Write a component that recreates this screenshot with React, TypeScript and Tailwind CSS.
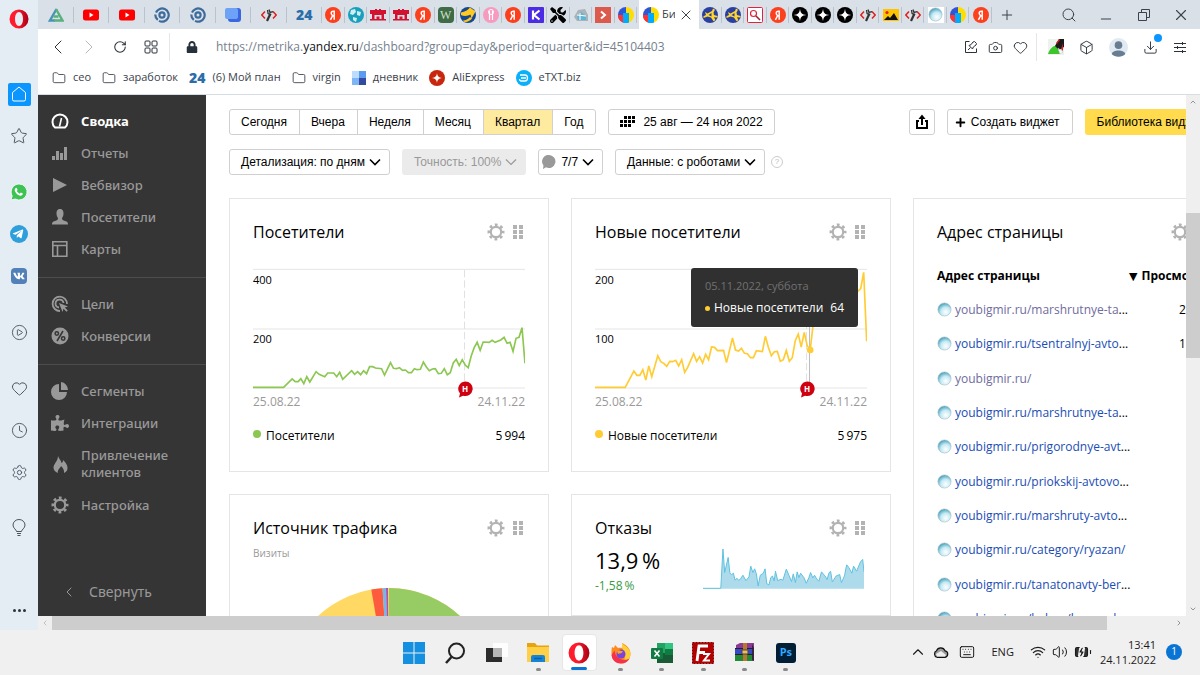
import React from 'react';
import {
  BatteryCharging, Box, Camera, ChevronDown, ChevronLeft, ChevronRight, ChevronUp, CirclePlay, Clock,
  Download, Folder, Heart, Keyboard, Minus, Plus, RotateCw, Search, Settings, Star, Volume2, Wifi, X,
} from 'lucide-react';
import { FaTelegramPlane, FaVk, FaPuzzlePiece, FaLock, FaTools } from 'react-icons/fa';

const visitors =
  '96,590 188,590 214,565 223,573 232,573 240,564 249,579 258,558 267,574 286,543 295,551 312,558 321,547 339,547 348,558 357,545 366,566 393,540 402,551 411,543 420,552 429,540 438,549 447,528 456,528 465,532 483,534 492,553 510,516 519,533 528,534 537,531 546,539 555,538 564,546 573,546 582,534 590,537 600,536 609,514 618,529 627,540 636,535 645,534 654,549 663,548 672,534 681,552 690,546 699,517 708,506 717,525 726,507 735,523 744,531 753,496 762,471 771,455 780,479 789,454 807,455 816,449 825,455 842,448 852,440 861,458 870,455 879,482 888,443 897,440 906,411 915,518';
const newVisitors =
  '96,590 187,590 213,541 222,554 231,554 240,537 249,568 258,526 267,558 285,495 294,513 303,518 312,527 321,512 330,513 339,509 348,526 357,507 366,545 375,530 393,489 402,512 411,498 420,517 429,491 438,507 447,469 456,470 465,480 483,479 492,516 510,442 519,478 528,481 537,473 546,488 555,489 564,501 573,501 582,480 600,483 609,437 618,470 627,495 636,483 645,482 654,512 663,507 672,479 681,512 690,501 699,450 708,430 717,469 726,425 735,465 744,478 753,400 771,330 789,350 870,340 887,302 896,294 905,245 914,452';
const bounces =
  '1114,307 1155,307 1160,190 1164,260 1172,215 1176,262 1180,266 1184,262 1188,283 1192,277 1196,283 1200,280 1206,268 1213,284 1220,273 1224,241 1229,260 1233,249 1237,264 1241,300 1246,268 1253,262 1257,249 1261,293 1266,297 1270,276 1274,270 1278,285 1281,256 1286,284 1294,280 1298,283 1306,250 1312,268 1318,287 1322,264 1327,290 1331,258 1335,275 1339,262 1347,276 1352,292 1358,275 1362,260 1367,276 1371,268 1376,279 1381,286 1387,258 1395,270 1400,281 1404,262 1408,256 1412,288 1421,270 1429,266 1433,290 1440,270 1445,237 1450,245 1457,262 1461,241 1468,256 1477,228 1482,221 1485,258';

// ---------- favicons ----------

const Ya = () => (
  <svg viewBox="0 0 16 16" className="size-4">
    <circle cx="8" cy="8" r="8" fill="#fc3f1d" />
    <path d="M9.200 12.800V4.300H8.400c-1.400 0-2.200.7-2.200 1.900 0 1.100.5 1.700 1.500 2.400l-2.300 4.200M9 9H7.600" stroke="#fff" strokeWidth="1.500" fill="none" />
  </svg>
);
const Metrika = () => (
  <svg viewBox="0 0 16 16" className="size-4">
    <path d="M8 0a8 8 0 0 0 0 16z" fill="#3156d3" />
    <path d="M8 0a8 8 0 0 1 0 16z" fill="#fd0" />
    <path d="M0 8h5v7.500A8 8 0 0 1 0 8z" fill="#f33" />
    <path d="M5 6h6v9.400a8 8 0 0 1-6 0z" fill="#00aaff" />
  </svg>
);
const Youtube = () => (
  <svg viewBox="0 0 16 12" className="h-3 w-4">
    <rect y="0.500" width="16" height="11" rx="2.500" fill="red" />
    <path d="M6.500 3.500v5l4-2.500z" fill="#fff" />
  </svg>
);
const Swirl = () => (
  <svg viewBox="0 0 16 16" className="size-4" fill="none" stroke="#3f6b9b" strokeWidth="2.200">
    <path d="M5 13.900A6.600 6.600 0 1 0 2 5.500M1.300 7.500a6.600 6.600 0 0 0 2.500 5.300" />
    <circle cx="8" cy="8" r="2.600" />
  </svg>
);
const Plan24 = () => <b className="text-sm leading-4 font-extrabold text-[#2a6da8]">24</b>;
const CodeWrench = () => (
  <svg viewBox="0 0 16 16" className="size-4" fill="none">
    <path d="M4 4.500.8 8 4 11.500M12 4.500 15.200 8 12 11.500" stroke="#e0201b" strokeWidth="1.500" />
    <path d="M6 14 9.500 6.500" stroke="#333" strokeWidth="2.200" />
    <path d="M8 2.500 9 5.500l3-.8M6.500 3l.6 3.500L10 8" stroke="#333" strokeWidth="1.300" />
  </svg>
);
const Triangle = () => (
  <svg viewBox="0 0 16 16" className="size-4" fill="none" strokeWidth="2.400">
    <path d="M8.500 2 2 13.500h5" stroke="#4a93b5" />
    <path d="M5.500 9.500h5M8 2l6.500 11.500H6" stroke="#58b07c" />
  </svg>
);
const BlueCube = () => (
  <svg viewBox="0 0 16 16" className="size-4">
    <rect x="3" y="1" width="13" height="14" rx="3" fill="#3a66e0" />
    <rect y="1" width="13" height="11" rx="2" fill="#6ea2f7" />
  </svg>
);
const GlobeMini = () => (
  <svg viewBox="0 0 16 16" className="size-4">
    <circle cx="8" cy="8" r="8" fill="#19a0bc" />
    <path d="M3 3l4-1 1 3-3 3-3-1zM9 4l4 1-1 4-3-1zM5 10l4 1-1 4-3-2z" fill="#cfeef2" />
  </svg>
);
const Castle = () => (
  <svg viewBox="0 0 16 16" className="size-4" fill="#d3122f">
    <path d="M0 3h5V2h2v1h2V2h2v1h5v4h-2v5h2v1.500H0V12h2V7H0zM4.500 8v4h2V9.500h3V12h2V8z" fillRule="evenodd" />
  </svg>
);
const GreenW = () => (
  <span className="flex size-4 items-center justify-center rounded-sm bg-[#3f6b46] font-['Liberation_Serif',serif] text-xs leading-4 text-[#cfe0c8]">W</span>
);
const Swoosh = () => (
  <svg viewBox="0 0 16 16" className="size-4">
    <circle cx="8" cy="8" r="8" fill="#17468f" />
    <path d="M1 5.500C5 5 8 3 10 .5l5.500 4-4 7-1-4C8 9 4 9.500 1 8zM3 13.500c3 0 5-1.500 7-3.500l2 1.500c-2 2.500-5 4-7.500 3.500z" fill="#ffc91f" />
  </svg>
);
const Pink = () => (
  <svg viewBox="0 0 16 16" className="size-4">
    <circle cx="8" cy="8" r="8" fill="#f79ac0" />
    <path d="M6.500 4v9M9.500 4v9" stroke="#fff" strokeWidth="1.200" />
    <circle cx="8" cy="5" r="2.500" fill="none" stroke="#fff" />
  </svg>
);
const KIcon = () => (
  <svg viewBox="0 0 16 16" className="size-4">
    <rect width="16" height="16" rx="1" fill="#4b2be3" />
    <path d="M5 3.500v9M11.500 3.500 6 8l5.500 4.500" stroke="#fff" strokeWidth="2.200" fill="none" />
  </svg>
);
const Tools = () => <FaTools className="size-4 text-black" />;
const GrayHouse = () => (
  <svg viewBox="0 0 16 16" className="size-4">
    <path d="M1 10 5 3l7-1 3 6v6H4z" fill="#aab3b8" />
    <path d="M4 9l4-4 5 4v4H5z" fill="#5fb4d4" />
    <path d="M4 8l9 1M7 6v7" stroke="#fff" />
  </svg>
);
const RedArrow = () => (
  <svg viewBox="0 0 16 16" className="size-4">
    <rect width="16" height="16" fill="#db5a4b" />
    <path d="M6 4.500 10 8l-4 3.500" stroke="#fff" strokeWidth="2" fill="none" />
  </svg>
);
const BlueBall = () => (
  <svg viewBox="0 0 16 16" className="size-4">
    <circle cx="8" cy="8" r="8" fill="#2b3fa0" />
    <path d="M3 5l2.500 1.500L10 4l1-2.500 2 1.300-1.500 2.700L12 8l3.500 1v1.500L12 10.300l1.500 3-2 1-2.500-3.800-3.500-1L1.500 11V9.300L4 8z" fill="#ffd62e" />
    <path d="M6.500 8 9.500 6v3.500z" fill="#2b3fa0" />
  </svg>
);
const RedSearch = () => (
  <svg viewBox="0 0 16 16" className="size-4" fill="none">
    <rect x="0.500" y="0.500" width="15" height="15" rx="1" fill="#fff" stroke="#e0233c" />
    <circle cx="6.500" cy="6.500" r="3" stroke="#e0233c" strokeWidth="1.200" />
    <path d="m9 9 4 4" stroke="#a02030" strokeWidth="1.600" />
  </svg>
);
const BlackStar = () => (
  <svg viewBox="0 0 16 16" className="size-4">
    <circle cx="8" cy="8" r="8" />
    <path d="M8 1.500C8.300 6 10 7.700 14.500 8 10 8.300 8.300 10 8 14.500 7.700 10 6 8.300 1.500 8 6 7.700 7.700 6 8 1.500z" fill="#fff" />
  </svg>
);
const Picture = () => (
  <svg viewBox="0 0 16 16" className="size-4">
    <rect y="2" width="16" height="12" fill="#ffc400" />
    <circle cx="4" cy="5.500" r="1.600" fill="#e0201b" />
    <path d="M1 13l4-4 2 2 4-5 4 7z" fill="#111" />
  </svg>
);
const Orb = () => (
  <svg viewBox="0 0 16 16" className="size-4 shrink-0">
    <defs>
      <radialGradient id="orb" cx="0.600" cy="0.700" r="0.750">
        <stop offset="0" stopColor="#fff" />
        <stop offset="0.500" stopColor="#c4e9f3" />
        <stop offset="1" stopColor="#2e93b0" />
      </radialGradient>
    </defs>
    <circle cx="7.500" cy="7.500" r="6.600" fill="url(#orb)" stroke="#a9bfc6" strokeWidth="0.600" />
  </svg>
);
const OrbTab = () => <span className="bg-white"><Orb /></span>;
const OperaRing = ({ className }: { className: string }) => (
  <svg viewBox="0 0 20 20" className={className}>
    <defs>
      <linearGradient id="opera" x1="0" x2="1">
        <stop offset="0.400" stopColor="#ff1b2d" />
        <stop offset="1" stopColor="#a70014" />
      </linearGradient>
    </defs>
    <path fillRule="evenodd" fill="url(#opera)" d="M10 .5a9.500 9.500 0 1 0 0 19 9.500 9.500 0 0 0 0-19zM10 3c2.400 0 4 3 4 7s-1.600 7-4 7-4-3-4-7 1.600-7 4-7z" />
  </svg>
);
const Caret = ({ thin }: { thin?: boolean }) => (
  <svg viewBox="0 0 14 14" className="size-[14px]" fill="none" stroke="currentColor" strokeWidth={thin ? 1.2 : 1.6}>
    <path d="m2 4.500 5 5 5-5" />
  </svg>
);

const pinnedTabs = [Triangle, Youtube, Youtube, Swirl, Swirl, BlueCube, CodeWrench, Plan24];
const leftTabs = [Ya, GlobeMini, Castle, Castle, Ya, GreenW, Swoosh, Pink, Ya, KIcon, Tools, GrayHouse, RedArrow, Metrika];
const rightTabs = [BlueBall, BlueBall, RedSearch, Ya, BlackStar, BlackStar, BlackStar, CodeWrench, Picture, CodeWrench, OrbTab, Metrika, Ya];

function TabIcon({ icon: Icon }: { icon: React.FC }) {
  return (
    <button className="relative flex items-center justify-center">
      <Icon />
      <span className="absolute right-0 h-4 w-px bg-[#b9c2cd]" />
    </button>
  );
}

function TabStrip() {
  return (
    <div className="flex h-[29px] shrink-0 items-stretch bg-[#d9e0e8] text-[#3a424c]">
      <div className="grid w-[284px] shrink-0 grid-cols-8">
        {pinnedTabs.map((icon, i) => <TabIcon key={i} icon={icon} />)}
      </div>
      <div className="grid w-[315px] shrink-0 grid-cols-14">
        {leftTabs.map((icon, i) => <TabIcon key={i} icon={icon} />)}
      </div>
      <div className="ml-0.5 flex w-[60px] shrink-0 items-center gap-[3px] bg-white pl-1">
        <Metrika />
        <span className="w-[13px] overflow-hidden text-[11px] whitespace-nowrap">Би</span>
        <button aria-label="Закрыть вкладку"><X className="size-4" strokeWidth={1.5} /></button>
      </div>
      <div className="grid w-[293px] shrink-0 grid-cols-13">
        {rightTabs.map((icon, i) => <TabIcon key={i} icon={icon} />)}
      </div>
      <button className="flex w-[30px] shrink-0 items-center justify-center" aria-label="Новая вкладка">
        <Plus className="size-4" strokeWidth={1.5} />
      </button>
      <div className="ml-auto grid w-[150px] shrink-0 grid-cols-4 place-items-center">
        <button aria-label="Поиск"><Search className="size-4" strokeWidth={1.5} /></button>
        <button aria-label="Свернуть" className="pt-2"><Minus className="size-4" strokeWidth={1.5} /></button>
        <button aria-label="Развернуть">
          <svg viewBox="0 0 12 12" className="size-3" fill="none" stroke="currentColor">
            <path d="M.5 3.500h8v8h-8zM3.500 3.500v-3h8v8h-3" />
          </svg>
        </button>
        <button aria-label="Закрыть"><X className="size-[18px]" strokeWidth={1.5} /></button>
      </div>
    </div>
  );
}

function AddressBar() {
  return (
    <div className="flex h-9 shrink-0 items-center bg-white pr-[13px] text-[#2b323a]">
      <div className="ml-1 grid w-[124px] shrink-0 grid-cols-4 place-items-center">
        <button aria-label="Назад"><ChevronLeft className="size-6" strokeWidth={1} /></button>
        <button aria-label="Вперёд"><ChevronRight className="size-6 text-[#b5b8bc]" strokeWidth={1} /></button>
        <button aria-label="Обновить"><RotateCw className="size-[14px]" strokeWidth={1.8} /></button>
        <button aria-label="Экспресс-панель">
          <svg viewBox="0 0 14 14" className="size-[14px]" fill="none" stroke="currentColor">
            <rect x="1" y="1" width="5" height="5" rx="1" /><rect x="8" y="1" width="5" height="5" rx="1" />
            <rect x="1" y="8" width="5" height="5" rx="1" /><rect x="8" y="8" width="5" height="5" rx="1" />
          </svg>
        </button>
      </div>
      <span className="ml-[3px] h-7 w-px bg-[#e4e7ea]" />
      <FaLock className="ml-4 size-3 text-[#26313b]" />
      <span className="ml-[18px] flex-1 overflow-hidden text-xs whitespace-nowrap text-[#75818e]">
        https://metrika.<span className="text-[#111]">yandex.ru</span>/dashboard?group=day&amp;period=quarter&amp;id=45104403
      </span>
      <div className="flex items-center gap-[10px]">
        <button aria-label="Снимок">
          <svg viewBox="0 0 14 14" className="size-[14px]" fill="none" stroke="currentColor">
            <path d="M5.500 1.500H1.500v11h11V8.500M4 10l2.500-2.500M5 5.500 8.500 9l.8-2L12 5l.5-1.500-2-2L9 2 7 4.700z" />
          </svg>
        </button>
        <button aria-label="Камера"><Camera className="size-[15px]" strokeWidth={1.5} /></button>
        <button aria-label="Избранное"><Heart className="size-[15px]" strokeWidth={1.5} /></button>
      </div>
      <span className="ml-2 h-7 w-px bg-[#e4e7ea]" />
      <div className="ml-[11px] flex items-center gap-[15px]">
        <svg viewBox="0 0 16 16" className="size-4">
          <rect width="16" height="16" fill="#eef2ee" />
          <path d="M0 15C2 9 6 6 9 7l3 8z" fill="#3cc62c" />
          <path d="M7 7l4-7h5v8l-5 3z" fill="#1a1a1a" />
          <path d="M8 4l3-4 1 1-3 4zM15 4v8l-2-2z" fill="#d02020" />
          <path d="m10 9 5 4-3 2z" fill="#fff" stroke="#bbb" strokeWidth="0.500" />
        </svg>
        <Box className="size-[15px]" strokeWidth={1.5} />
        <svg viewBox="0 0 20 20" className="size-[19px]">
          <circle cx="10" cy="10" r="10" fill="#e1e9f2" />
          <circle cx="10" cy="7.500" r="4" fill="#687d92" />
          <path d="M3 17c0-5 14-5 14 0-3 3.500-11 3.500-14 0z" fill="#687d92" />
        </svg>
        <button className="relative" aria-label="Загрузки">
          <Download className="size-[15px]" strokeWidth={1.5} />
          <span className="absolute -top-1.5 -right-1 size-2 rounded-full bg-[#0a95ff]" />
        </button>
        <button aria-label="Настройки панели">
          <svg viewBox="0 0 14 14" className="size-[14px]" fill="none" stroke="currentColor">
            <path d="M1 3.500h12M1 7.500h12M1 11.500h12M9.500 2v3M4.500 6v3M9.500 10v3" />
          </svg>
        </button>
      </div>
    </div>
  );
}

const bookmarks = [
  { label: 'сео', icon: 'folder' },
  { label: 'заработок', icon: 'folder' },
  { label: '(6) Мой план', icon: 'plan' },
  { label: 'virgin', icon: 'folder' },
  { label: 'дневник', icon: 'diary' },
  { label: 'AliExpress', icon: 'ali' },
  { label: 'eTXT.biz', icon: 'etxt' },
];

function BookmarkIcon({ icon }: { icon: string }) {
  if (icon === 'folder') return <Folder className="size-[14px]" strokeWidth={1.5} />;
  if (icon === 'plan') return <Plan24 />;
  if (icon === 'diary')
    return (
      <svg viewBox="0 0 14 14" className="size-[14px]">
        <path d="M0 0h7v14H0z" fill="#7fb5f5" /><path d="M7 0h7v7H7z" fill="#5c9cf0" /><path d="M7 7h7v7H7z" fill="#334b9f" /><path d="M0 0h7v7H0z" fill="#bcdcff" />
      </svg>
    );
  if (icon === 'ali')
    return (
      <svg viewBox="0 0 16 16" className="size-4">
        <circle cx="8" cy="8" r="8" fill="#c8270e" />
        <path d="M8 3c.4 3.300 1.700 4.600 5 5-3.300.4-4.600 1.700-5 5-.4-3.300-1.700-4.600-5-5 3.300-.4 4.600-1.700 5-5z" fill="#fff" />
      </svg>
    );
  return (
    <svg viewBox="0 0 16 16" className="size-4" fill="none" stroke="#fff" strokeWidth="1.300">
      <circle cx="8" cy="8" r="8" fill="#0bb0fa" stroke="none" />
      <path d="M4 5h5a2.500 3 0 0 1 0 6H5a2 2 0 0 1-1.500-2M5 8h5" />
    </svg>
  );
}

function Bookmarks() {
  return (
    <nav className="flex h-[30px] shrink-0 items-center gap-[11px] border-b border-[#d5dde5] bg-white px-[14px] pb-1 text-[11px] whitespace-nowrap text-[#3a424c]">
      {bookmarks.map((b) => (
        <a key={b.label} href="#" className="flex items-center gap-[7px]">
          <BookmarkIcon icon={b.icon} />
          {b.label}
        </a>
      ))}
    </nav>
  );
}

// ---------- opera rail ----------

function Rail() {
  const slot = 'flex h-[42px] shrink-0 items-center justify-center';
  return (
    <aside className="flex w-[38px] shrink-0 flex-col bg-[#e4ecf4] text-[#4a545f]">
      <div className="mb-9 flex h-[37px] items-center justify-center"><OperaRing className="size-5" /></div>
      <button className={slot} aria-label="Главная">
        <span className="flex size-[23px] items-center justify-center rounded-xs bg-[#0a95ff] text-white">
          <svg viewBox="0 0 16 16" className="size-4" fill="none" stroke="currentColor">
            <path d="M8 1 1.500 6.500v7A1.500 1.500 0 0 0 3 15h10a1.500 1.500 0 0 0 1.500-1.500v-7z" />
          </svg>
        </span>
      </button>
      <button className={slot} aria-label="Закладки"><Star className="size-[18px]" strokeWidth={1.3} /></button>
      <button className={slot + ' mt-[14px]'} aria-label="WhatsApp">
        <svg viewBox="0 0 18 18" className="size-[18px]">
          <path d="M9 1a8 8 0 1 1-3.800 15L1 17l1.200-4A8 8 0 0 1 9 1z" fill="#3dc254" stroke="#fff" strokeWidth="0.800" />
          <path d="M5.200 5.500c.8-1 1.500-.8 1.800 0l.6 1.400-.8 1.200c.6 1.200 1.600 2 2.900 2.600l1.100-1.100 2 1c.2 1.200-.9 2.100-2.200 2.100-2.900-.3-5.700-3.300-5.900-5.700 0-.6.200-1.100.5-1.500z" fill="#fff" />
        </svg>
      </button>
      <button className={slot} aria-label="Telegram">
        <span className="flex size-[18px] items-center justify-center rounded-full bg-[#2e9fdb] pr-0.5 text-white"><FaTelegramPlane className="size-3" /></span>
      </button>
      <button className={slot} aria-label="VK">
        <span className="flex size-4 items-center justify-center rounded bg-[#5181b8] text-white"><FaVk className="size-3" /></span>
      </button>
      <button className={slot + ' mt-[14px]'} aria-label="Плеер"><CirclePlay className="size-[17px]" strokeWidth={1.3} /></button>
      <button className={slot + ' mt-[14px]'} aria-label="Избранное"><Heart className="size-[17px]" strokeWidth={1.4} /></button>
      <button className={slot} aria-label="История"><Clock className="size-[17px]" strokeWidth={1.3} /></button>
      <button className={slot} aria-label="Настройки"><Settings className="size-[17px]" strokeWidth={1.3} /></button>
      <button className={slot + ' mt-[14px]'} aria-label="Подсказки">
        <svg viewBox="0 0 14 18" className="h-[18px] w-[14px]" fill="none" stroke="currentColor">
          <path d="M4.500 12.500c0-2-3.500-3-3.500-6.500a6 5.500 0 0 1 12 0c0 3.500-3.500 4.500-3.500 6.500zM5 14.500h4M5.500 16.500h3" />
        </svg>
      </button>
      <button className="mt-auto flex h-10 items-center justify-center gap-0.5" aria-label="Ещё">
        <i className="size-[3px] rounded-full bg-[#2b323a]" />
        <i className="size-[3px] rounded-full bg-[#2b323a]" />
        <i className="size-[3px] rounded-full bg-[#2b323a]" />
      </button>
    </aside>
  );
}

// ---------- metrika ----------

const Gear = ({ className }: { className: string }) => (
  <svg viewBox="0 0 18 18" className={className} fill="none" stroke="currentColor">
    <circle cx="9" cy="9" r="5.200" strokeWidth="2.200" />
    <circle cx="9" cy="9" r="7.200" strokeWidth="2.600" strokeDasharray="2.800 2.855" strokeDashoffset="1.400" />
  </svg>
);

const navIcons: Record<string, React.ReactNode> = {
  summary: <g fill="none" stroke="currentColor" strokeWidth="2"><path d="M4 15.500A7.500 7.500 0 1 1 14 15.500z" /><path d="M8.500 14.500 10.500 6" strokeWidth="1.600" /></g>,
  reports: <path d="M1 12h3v4H1zM5 7h3v9H5zM9 9h3v7H9zM13 3h3v13h-3z" />,
  webvisor: <path d="M2 2v14l14-7z" />,
  people: <path d="M9 1C6 1 5.500 3.500 5.500 5.500c0 2 .8 3.500 1.500 4.500 0 2-1 2.500-3 3-2.500.6-3 1.500-3 3.500h16c0-2-.5-2.900-3-3.500-2-.5-3-1-3-3 .7-1 1.500-2.500 1.500-4.500C12.500 3.500 12 1 9 1z" />,
  maps: <path d="M1.800 1.800h14v14.500h-14zM1.800 5.500h14M6.500 5.500v10.800" fill="none" stroke="currentColor" strokeWidth="1.600" />,
  goals: <g fill="none" stroke="currentColor" strokeWidth="1.800"><path d="M16 9A7.200 7.200 0 1 0 9 16M12.500 8A4 4 0 1 0 8 12.500" /><path d="m8 8 9 3.500-3.200 1 3 3-1.300 1.300-3-3L11.500 17z" fill="currentColor" stroke="none" /></g>,
  conversions: <g><circle cx="9" cy="9" r="8.500" /><g fill="none" stroke="#353535" strokeWidth="1.500"><path d="M12 4 6 14" /><circle cx="5.800" cy="6.500" r="1.700" /><circle cx="12.200" cy="11.500" r="1.700" /></g></g>,
  segments: <path d="M8 2v8h8a8 8 0 1 1-8-8zM10 0a8 8 0 0 1 7 8h-7z" />,
  leads: <path d="M7 1c1 3 3 4 3.500 7 1-.5 1.500-1.500 1.500-3 3 3 4.500 5 4.500 8 0 2-1 4-3.500 5 .5-3-1-5-3-7-1 2.500-4 4-3 7-3-1-4.500-3-4.500-5.500C2.500 9 7 6 7 1z" />,
};

function NavItem({ icon, label, active }: { icon: string; label: React.ReactNode; active?: boolean }) {
  return (
    <a href="#" className={'flex min-h-8 items-center gap-3 pl-[13px] leading-[17px] ' + (active ? 'font-bold text-white' : 'font-medium text-[#999]')}>
      {icon === 'puzzle' ? <FaPuzzlePiece className="size-[18px] shrink-0" />
        : icon === 'settings' ? <Gear className="size-[18px] shrink-0" />
        : <svg viewBox="0 0 18 18" className="size-[18px] shrink-0" fill="currentColor">{navIcons[icon]}</svg>}
      <span>{label}</span>
    </a>
  );
}

function MetrikaNav() {
  return (
    <nav className="flex w-[168px] shrink-0 flex-col bg-[#353535] font-['Noto_Sans',sans-serif] text-[13px]">
      <div className="border-b border-[#4d4d4d] pt-[10px] pb-3">
        <NavItem icon="summary" label="Сводка" active />
        <NavItem icon="reports" label="Отчеты" />
        <NavItem icon="webvisor" label="Вебвизор" />
        <NavItem icon="people" label="Посетители" />
        <NavItem icon="maps" label="Карты" />
      </div>
      <div className="border-b border-[#4d4d4d] pt-[10px] pb-3">
        <NavItem icon="goals" label="Цели" />
        <NavItem icon="conversions" label="Конверсии" />
      </div>
      <div className="pt-[10px] pb-3">
        <NavItem icon="segments" label="Сегменты" />
        <NavItem icon="puzzle" label="Интеграции" />
        <div className="py-2"><NavItem icon="leads" label={<>Привлечение<br />клиентов</>} /></div>
        <NavItem icon="settings" label="Настройка" />
      </div>
      <button className="mt-auto mb-3 flex h-6 items-center gap-3 pl-[23px] text-sm text-[#999]">
        <ChevronLeft className="size-4" strokeWidth={1.5} /> Свернуть
      </button>
    </nav>
  );
}

const btn = 'flex h-[26px] items-center rounded-[3px] border border-[#d0d0d0] bg-white';

function Toolbar() {
  const periods = ['Сегодня', 'Вчера', 'Неделя', 'Месяц', 'Квартал', 'Год'];
  return (
    <div className="flex flex-col gap-[14px] font-['Liberation_Sans',Arial,sans-serif] text-xs whitespace-nowrap text-black">
      <div className="flex items-center">
        <div className={btn + ' overflow-hidden'}>
          {periods.map((p) => (
            <button key={p} className={'h-full border-r border-[#d0d0d0] pr-3 pl-[11px] last:border-r-0 ' + (p === 'Квартал' ? 'bg-[#ffeba0]' : '')}>{p}</button>
          ))}
        </div>
        <button className={btn + ' ml-3 gap-2 px-[11px]'}>
          <svg viewBox="0 0 15 12" className="h-3 w-[15px]">
            <path d="M4 0h3v3H4zM8 0h3v3H8zM12 0h3v3h-3zM0 4h3v3H0zM4 4h3v3H4zM8 4h3v3H8zM12 4h3v3h-3zM0 8h3v3H0zM4 8h3v3H4zM8 8h3v3H8z" />
          </svg>
          25 авг — 24 ноя 2022
        </button>
        <button className={btn + ' ml-auto w-[26px] justify-center'} aria-label="Экспорт">
          <svg viewBox="0 0 14 16" className="h-4 w-[14px]" fill="none" stroke="currentColor" strokeWidth="2">
            <path d="M4 7H2v7h10V7h-2M7 11V3" /><path d="M3.500 5 7 .5 10.500 5z" fill="currentColor" stroke="none" />
          </svg>
        </button>
        <button className={btn + ' ml-3 gap-1 px-[6px] pr-3'}>
          <Plus className="size-[13px]" strokeWidth={3.5} /> Создать виджет
        </button>
        <button className="ml-3 flex h-[26px] items-center rounded-[3px] bg-[#ffdb4d] pr-[15px] pl-3">Библиотека виджетов</button>
      </div>
      <div className="flex items-center gap-3">
        <button className={btn + ' gap-[3px] pr-[7px] pl-[11px]'}>Детализация: по дням <Caret /></button>
        <button disabled className="flex h-[26px] items-center gap-[3px] rounded-[3px] bg-[#ebebeb] pr-2 pl-3 text-[#999]">Точность: 100% <Caret thin /></button>
        <button className={btn + ' gap-[3px] pr-[7px] pl-[3px]'}>
          <svg viewBox="0 0 14 14" className="mr-0.5 size-[14px]" fill="#999"><path d="M7 0a6.500 6.500 0 1 1-3 12.300L1 14l.5-3.500A6.500 6.500 0 0 1 7 0z" /></svg>
          7/7 <Caret />
        </button>
        <button className={btn + ' gap-[3px] pr-[7px] pl-[11px]'}>Данные: с роботами <Caret /></button>
        <span className="-ml-[6px] flex size-3 items-center justify-center rounded-full border border-[#ccc] text-[8px] text-[#bbb]">?</span>
      </div>
    </div>
  );
}

function Card({ title, className = '', children }: { title: string; className?: string; children: React.ReactNode }) {
  return (
    <section className={'border border-[#e5e5e5] bg-white px-[23px] pt-[21px] ' + className}>
      <header className="flex h-6 items-center justify-between">
        <h2 className="text-base">{title}</h2>
        <div className="flex items-center gap-2 pr-0.5 text-[#b3b3b3]">
          <button aria-label="Настроить"><Gear className="size-[18px]" /></button>
          <svg viewBox="0 0 10 16" className="h-4 w-[10px]" fill="currentColor">
            <path d="M0 1h4v4H0zM6 1h4v4H6zM0 6h4v4H0zM6 6h4v4H6zM0 11h4v4H0zM6 11h4v4H6z" />
          </svg>
        </div>
      </header>
      {children}
    </section>
  );
}

interface ChartProps { points: string; color: string; top: string; mid: string; name: string; total: string; hover?: boolean }

function LineCard({ points, color, top, mid, name, total, hover }: ChartProps) {
  return (
    <Card title={name} className="h-[274px]">
      <div className="relative mt-[23px] h-[128px] text-[11px] leading-[14px]">
        <svg viewBox="96 229 819 384" preserveAspectRatio="none" className="absolute inset-0 size-full">
          <path d="M96 236h819M96 415h819M96 592h819" stroke="#e5e5e5" strokeWidth="3" />
          <path d="M733 238v354" stroke="#e0e0e0" strokeWidth="3" strokeDasharray="22 9" />
          {hover && <path d="M742 400v192" stroke="#bbb" strokeWidth="3" />}
          <polyline points={points} fill="none" stroke={color} strokeWidth="5" />
          {hover && <circle cx="744" cy="478" r="10" fill={color} />}
        </svg>
        <svg viewBox="0 0 16 17" className="absolute bottom-[-3px] left-[75%] h-[17px] w-4">
          <path d="M8 .5a7.300 7.300 0 1 1-2 14.200L2 16.500l1-4A7.300 7.300 0 0 1 8 .5z" fill="#cf0010" />
          <text x="8" y="11" textAnchor="middle" fontSize="8" fontWeight="bold" fill="#fff">Н</text>
        </svg>
        <div className="pt-[6px]">{top}</div>
        <div className="pt-[45px]">{mid}</div>
        {hover && (
          <div className="absolute top-px right-[9px] h-[59px] w-[167px] rounded-[3px] bg-[#303030] px-[14px] pt-[10px] leading-4 whitespace-nowrap">
            <div className="text-[#707070]">05.11.2022, суббота</div>
            <div className="mt-[6px] flex items-center text-xs leading-4 text-white">
              <span className="mr-1 size-[5px] rounded-full bg-[#ffcc33]" />
              {name}
              <span className="ml-auto">64</span>
            </div>
          </div>
        )}
      </div>
      <div className="flex justify-between text-xs leading-[14px] text-[#999]">
        <span>25.08.22</span>
        <span>24.11.22</span>
      </div>
      <div className="mt-[19px] flex items-center text-xs leading-4">
        <svg viewBox="0 0 8 8" className="mr-[5px] mb-1 size-2"><circle cx="4" cy="4" r="4" fill={color} /></svg>
        {name}
        <span className="ml-auto">{total}</span>
      </div>
    </Card>
  );
}

const pages = [
  { url: 'youbigmir.ru/marshrutnye-ta', cut: true, seen: true, views: '2' },
  { url: 'youbigmir.ru/tsentralnyj-avto', cut: true, views: '1' },
  { url: 'youbigmir.ru/', seen: true },
  { url: 'youbigmir.ru/marshrutnye-ta', cut: true },
  { url: 'youbigmir.ru/prigorodnye-avt', cut: true },
  { url: 'youbigmir.ru/priokskij-avtovo', cut: true },
  { url: 'youbigmir.ru/marshruty-avto', cut: true },
  { url: 'youbigmir.ru/category/ryazan/' },
  { url: 'youbigmir.ru/tanatonavty-ber', cut: true },
  { url: 'youbigmir.ru/kuban/krasnodar', cut: true },
];

function PagesCard() {
  return (
    <Card title="Адрес страницы">
      <table className="mt-[15px] h-[377px] w-full table-fixed text-xs whitespace-nowrap">
        <thead>
          <tr className="h-[34px]">
            <th className="text-left">Адрес страницы</th>
            <th className="w-20 text-left"><span className="mr-1 font-['DejaVu_Sans',sans-serif] text-[11px]">▼</span>Просмотры</th>
          </tr>
        </thead>
        <tbody>
          {pages.map((p, i) => (
            <tr key={i} className="h-[34px]">
              <td>
                <span className="flex items-center gap-0.5">
                  <Orb />
                  <span><a href="#" className={p.seen ? 'text-[#6f6c9e]' : 'text-[#1a4db5]'}>{p.url}</a>{p.cut && '...'}</span>
                </span>
              </td>
              <td className="pl-[50px]">{p.views}</td>
            </tr>
          ))}
        </tbody>
      </table>
    </Card>
  );
}

function Dashboard() {
  return (
    <main className="min-w-0 flex-1 overflow-hidden bg-white">
      <div className="min-w-[1050px] px-[23px] pt-[14px]">
        <Toolbar />
        <div className="mt-[23px] grid grid-cols-3 items-start gap-[22px]">
          <div className="flex flex-col gap-[22px]">
            <LineCard points={visitors} color="#8bc751" top="400" mid="200" name="Посетители" total={'5\u2009994'} />
            <Card title="Источник трафика" className="h-[274px]">
              <div className="mt-[5px] text-[10px] leading-4 text-[#999]">Визиты</div>
              <svg viewBox="-104 -104 208 208" className="mx-auto mt-[27px] size-[208px]">
                <circle r="104" fill="#ffd963" />
                <path d="M0 0V-104A104 104 0 0 1 0 104z" fill="#97cc64" />
                <path d="M0 0-17.700-102.500A104 104 0 0 1-6.500-103.800z" fill="#fd5a3e" />
                <path d="M0 0-6.500-103.800A104 104 0 0 1-3-104z" fill="#77b6e7" />
                <path d="M0 0-3-104H-1z" fill="#a955b8" />
              </svg>
            </Card>
          </div>
          <div className="flex flex-col gap-[22px]">
            <LineCard points={newVisitors} color="#ffcc33" top="200" mid="100" name="Новые посетители" total={'5\u2009975'} hover />
            <Card title="Отказы" className="h-[122px]">
              <div className="flex items-start justify-between">
                <div>
                  <div className="mt-1 text-[22px] leading-8">13,9&#8201;%</div>
                  <div className="mt-0.5 text-xs leading-4 text-[#3a9b3f]">-1,58&#8201;%</div>
                </div>
                <svg viewBox="1114 187 371 122" preserveAspectRatio="none" className="mt-2 mr-[3px] h-[41px] w-[161px]">
                  <polygon points={bounces + ' 1485,308 1114,308'} fill="#addbeb" />
                  <polyline points={bounces} fill="none" stroke="#5fc1e0" strokeWidth="1" vectorEffect="non-scaling-stroke" />
                </svg>
              </div>
            </Card>
          </div>
          <PagesCard />
        </div>
      </div>
    </main>
  );
}

// ---------- windows taskbar ----------

const taskIcons: { name: string; node: React.ReactNode; open?: boolean; active?: boolean }[] = [
  { name: 'Пуск', node: <svg viewBox="0 0 22 22" className="size-[22px]" fill="#1590e0"><path d="M0 0h10.500v10.500H0zM11.500 0H22v10.500H11.500zM0 11.500h10.500V22H0zM11.500 11.500H22V22H11.500z" /></svg> },
  { name: 'Поиск', node: <svg viewBox="0 0 22 22" className="size-[22px]" fill="none" stroke="#222" strokeWidth="2"><circle cx="12.500" cy="9" r="7.500" /><path d="m7.500 15-5.500 6" strokeWidth="2.500" /></svg> },
  { name: 'Представление задач', node: <svg viewBox="0 0 22 22" className="size-[22px]"><path d="M7 1h15v14H7z" fill="#fdfdfd" /><path d="M0 6h16v14H0z" fill="#2b2b2b" /><path d="M7 6h9v9H7z" fill="#b5b5b5" /></svg> },
  { name: 'Проводник', open: true, node: <svg viewBox="0 0 24 22" className="h-[22px] w-6"><path d="M1 1h8l2 2.500h12V20H1z" fill="#e6a410" /><path d="M1 5h22v15H1z" fill="#ffcf48" /><path d="M5 20v-5a2 2 0 0 1 2-2h10a2 2 0 0 1 2 2v5z" fill="#1583d6" /><path d="M8 16.500h8" stroke="#0c5ea8" strokeWidth="1.500" /></svg> },
  { name: 'Opera', open: true, active: true, node: <OperaRing className="size-[22px]" /> },
  {
    name: 'Firefox', open: true, node: (
      <svg viewBox="0 0 22 22" className="size-[22px]">
        <path d="M2 5l2 1 1-3 3 3c1.500-.5 3-.5 4 0V1c4 2 8.500 5 8.500 11a9.500 9.500 0 0 1-19 0C1.500 9 1.500 7 2 5z" fill="#ff8a1c" />
        <path d="M12 1c2 3 9 5 8.500 12-1 6-6 9-10 8.500C16 18 17 12 12 6z" fill="#ffcf3a" />
        <path d="M1.500 13C2 18 6 21.500 11 21.500c4 0 7-2 8.500-5-5 3-14 1-15-8z" fill="#f5314e" /><circle cx="11" cy="12" r="4.500" fill="#7a45d8" /><path d="M7 9c3-2 4 1 6 0-1 3-3 2-5 3z" fill="#ffa02c" />
      </svg>
    ),
  },
  {
    name: 'Excel', open: true, node: (
      <svg viewBox="0 0 22 22" className="size-[22px]">
        <path d="M6 1h8v10H6z" fill="#21a366" /><path d="M14 1h8v6h-8z" fill="#33c481" /><path d="M14 7h8v6h-8z" fill="#107c41" /><path d="M6 11h8v10H6zM14 13h8v8h-8z" fill="#185c37" />
        <rect y="6" width="12" height="11" rx="1" fill="#107c41" /><path d="m3.500 8.500 5 6M8.500 8.500l-5 6" stroke="#fff" strokeWidth="1.600" />
      </svg>
    ),
  },
  {
    name: 'FileZilla', open: true, node: (
      <svg viewBox="0 0 22 22" className="size-[22px]" fill="none" stroke="#fff">
        <rect x="0.500" y="0.500" width="21" height="21" fill="#b30000" stroke="#7e0000" strokeDasharray="2 1" />
        <path d="M5 19 7 4h9M6 10.500h7" strokeWidth="2.800" /><path d="M11 12h6l-5 6.500h6" strokeWidth="2" />
      </svg>
    ),
  },
  {
    name: 'WinRAR', open: true, node: (
      <svg viewBox="0 0 22 22" className="size-[22px]">
        <path d="M2 3 6 1h14v5H2z" fill="#8a3b8f" /><path d="M1 7h19v5H1z" fill="#3748c8" /><path d="M1 13h19v6H1z" fill="#218a34" />
        <path d="M18 2l2 4v13l-2-1z" fill="#3a2440" /><path d="M1 6.500h18M1 12.500h18" stroke="#222" />
        <path d="M9 1h4v18H9z" fill="#b9772e" /><path d="M8 8h6v4H8z" fill="#e6c06a" stroke="#543" />
      </svg>
    ),
  },
  { name: 'Photoshop', open: true, node: <span className="flex size-5 items-center justify-center rounded-[3px] bg-[#001e36] text-[11px] font-bold text-[#31a8ff]">Ps</span> },
];

function Taskbar() {
  return (
    <footer className="grid h-[45px] shrink-0 grid-cols-[1fr_413px_1fr] bg-[#f1f0f0] text-[#1b1b1b]">
      <span />
      <div className="grid grid-cols-10">
        {taskIcons.map((t) => (
          <button key={t.name} aria-label={t.name} className={'relative my-1 flex items-center justify-center rounded ' + (t.active ? 'mx-[3px] border border-[#e6e6e6] bg-white' : '')}>
            {t.node}
            {t.open && <i className={'absolute bottom-0 h-[3px] rounded-full ' + (t.active ? 'w-4 bg-[#0a74d4]' : 'w-[5px] bg-[#8a8a8a]')} />}
          </button>
        ))}
      </div>
      <div className="flex items-center justify-end pr-[18px] pb-0.5 text-[11px] leading-[15px] whitespace-nowrap">
        <ChevronUp className="size-[18px]" strokeWidth={1.5} />
        <svg viewBox="0 0 16 12" className="ml-[6px] h-3 w-4"><path d="M4 11.300a3.500 3.500 0 0 1-.5-6.500 4.500 4.500 0 0 1 8.500 0 3.300 3.300 0 0 1 0 6.500z" fill="#999" stroke="#111" strokeWidth="1.200" /><path d="M3 8l5-3 5 4-1 1.500H4z" fill="#eee" /></svg>
        <Keyboard className="ml-[10px] size-4" strokeWidth={1.5} />
        <span className="ml-4">ENG</span>
        <Wifi className="ml-4 size-4" strokeWidth={1.8} />
        <Volume2 className="ml-[6px] size-4" strokeWidth={1.5} />
        <BatteryCharging className="ml-[6px] size-[18px]" fill="#333" strokeWidth={1.5} />
        <div className="ml-2 text-right">
          <div>13:41</div>
          <div>24.11.2022</div>
        </div>
        <span className="ml-[10px] flex size-4 items-center justify-center rounded-full bg-[#0a74d4] text-[10px] text-white">1</span>
      </div>
    </footer>
  );
}

export default function App() {
  return (
    <div className="flex h-screen w-full flex-col overflow-hidden font-['Open_Sans',sans-serif] text-black">
      <div className="flex min-h-0 flex-1">
        <Rail />
        <div className="flex min-w-0 flex-1 flex-col">
          <TabStrip />
          <AddressBar />
          <Bookmarks />
          <div className="flex min-h-0 flex-1">
            <MetrikaNav />
            <Dashboard />
            <div className="flex w-[14px] shrink-0 flex-col items-center bg-[#efefef] text-[#666]">
              <ChevronUp className="h-[14px] w-2" />
              <div className="mt-[104px] h-[145px] w-full bg-[#cdcdcd]" />
              <ChevronDown className="mt-auto h-[14px] w-2" />
            </div>
          </div>
          <div className="flex h-[14px] shrink-0 items-center bg-[#efefef] text-[#666]">
            <ChevronLeft className="h-2 w-[14px] text-[#aaa]" />
            <div className="mr-[65px] h-full flex-1 bg-[#cdcdcd]" />
            <ChevronRight className="mr-[14px] h-2 w-[14px]" />
          </div>
        </div>
      </div>
      <Taskbar />
    </div>
  );
}
